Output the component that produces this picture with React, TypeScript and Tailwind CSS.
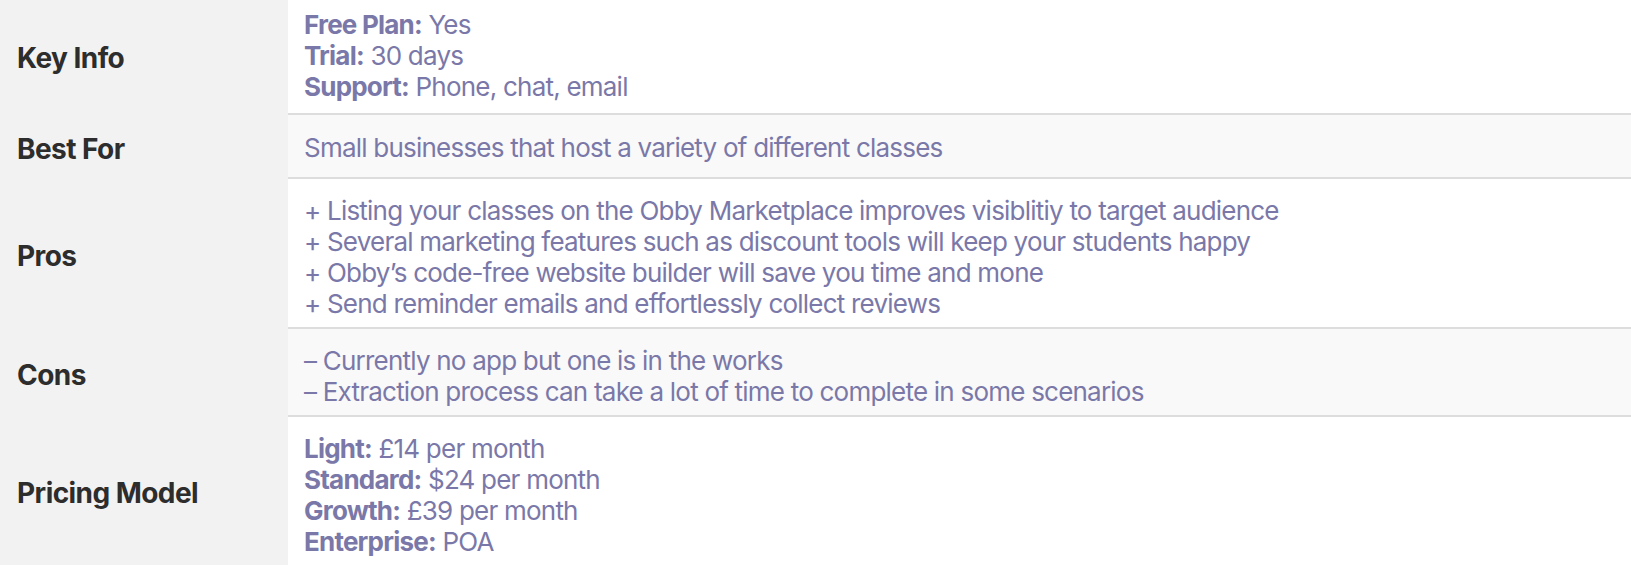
const rows = [
  {
    label: "Key Info",
    bg: "bg-white",
    pad: "pt-[13px] pb-[11px]",
    lines: [
      { b: "Free Plan:", t: " Yes" },
      { b: "Trial:", t: " 30 days" },
      { b: "Support:", t: " Phone, chat, email" },
    ],
  },
  {
    label: "Best For",
    bg: "bg-[#f9f9f9]",
    pad: "pt-[13px] pb-[11px]",
    lines: [{ t: "Small businesses that host a variety of different classes" }],
  },
  {
    label: "Pros",
    bg: "bg-white",
    pad: "pt-[16px] pb-[8px]",
    lines: [
      { t: "+ Listing your classes on the Obby Marketplace improves visiblitiy to target audience" },
      { t: "+ Several marketing features such as discount tools will keep your students happy" },
      { t: "+ Obby’s code-free website builder will save you time and mone" },
      { t: "+ Send reminder emails and effortlessly collect reviews" },
    ],
  },
  {
    label: "Cons",
    bg: "bg-[#f9f9f9]",
    pad: "pt-[16px] pb-[8px]",
    lines: [
      { t: "– Currently no app but one is in the works" },
      { t: "– Extraction process can take a lot of time to complete in some scenarios" },
    ],
  },
  {
    label: "Pricing Model",
    bg: "bg-white",
    pad: "pt-[16px] pb-[8px]",
    lines: [
      { b: "Light:", t: " £14 per month" },
      { b: "Standard:", t: " $24 per month" },
      { b: "Growth:", t: " £39 per month" },
      { b: "Enterprise:", t: " POA" },
    ],
  },
];

export default function App() {
  return (
    <div className="w-[1631px] h-[567px] overflow-hidden bg-white font-['Inter',sans-serif]">
      <div className="-mt-1 flex flex-col">
        {rows.map((row, i) => (
          <div key={i} className="flex">
            <div className="w-[288px] shrink-0 bg-[#f2f2f2] flex items-center pl-[17px] pt-[14px] pb-[10px]">
              <span className="text-[28px] leading-[40px] font-bold text-[#2d2d2d] tracking-[-0.02em]">
                {row.label}
              </span>
            </div>
            <div
              className={`flex-1 flex flex-col justify-center pl-4 text-[26px] leading-[31px] text-[#7a78a8] tracking-[-0.03em] ${row.pad} ${row.bg} ${
                i < rows.length - 1 ? "border-b-2 border-[#dddddd]" : ""
              }`}
            >
              {row.lines.map((l, j) => (
                <div key={j}>
                  {l.b && <span className="font-bold">{l.b}</span>}
                  {l.t}
                </div>
              ))}
            </div>
          </div>
        ))}
      </div>
    </div>
  );
}
